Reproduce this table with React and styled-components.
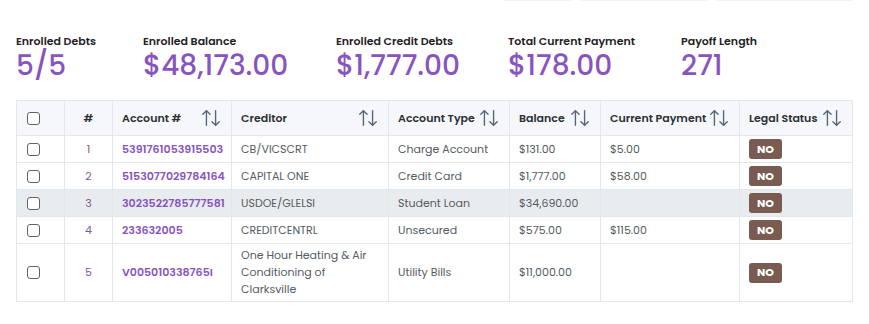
import React from "react";
import styled, { createGlobalStyle } from "styled-components";
import { ArrowUpDown } from "lucide-react";

const ColorPrim = "#8854c0";
const ColorText = "#555b61";
const ColorHead = "#2b2f33";
const ColorLine = "#e3e6ea";

const GlobalStyle = createGlobalStyle`
  html, body {
    margin: 0;
    padding: 0;
    background: #fff;
  }
  body {
    font-family: "Poppins", "Open Sans", "Liberation Sans", sans-serif;
  }
`;

const Page = styled.div`
  box-sizing: border-box;
  min-height: 324px;
  border-right: 1px solid #dcdcdc;
  padding: 0 16px;
`;

const Toolbar = styled.div`
  display: flex;
  justify-content: flex-end;
  gap: 9px;
  height: 2px;
`;

const Ghost = styled.div`
  width: ${(p) => p.w}px;
  height: 1px;
  background: #f1f1f1;
`;

const Stats = styled.div`
  display: grid;
  grid-template-columns: 127px 193px 172px 173px auto;
  padding-top: 32px;
`;

const Stat = styled.div`
  display: flex;
  flex-direction: column;
  gap: 2px;
`;

const Label = styled.span`
  font-size: 11px;
  font-weight: 600;
  line-height: 15px;
  color: #1f2225;
  white-space: nowrap;
`;

const Value = styled.span`
  font-size: 28px;
  font-weight: 500;
  line-height: 30px;
  color: ${ColorPrim};
  white-space: nowrap;
`;

const Table = styled.table`
  margin-top: 19px;
  width: 836px;
  table-layout: fixed;
  border-collapse: collapse;
  font-size: 11px;
  color: ${ColorText};
`;

const Col = styled.col`
  width: ${(p) => p.w}px;
`;

const Th = styled.th`
  background: #f5f7fa;
  border: 1px solid ${ColorLine};
  padding: 6px 9px;
  text-align: ${(p) => (p.center ? "center" : "left")};
  font-weight: 600;
  color: ${ColorHead};
  height: 21px;
`;

const HeadInner = styled.div`
  display: flex;
  align-items: center;
  justify-content: space-between;
  white-space: nowrap;
  svg {
    color: #56677a;
    flex-shrink: 0;
  }
`;

const Row = styled.tr`
  background: ${(p) => (p.active ? "#e9ecef" : "#fff")};
`;

const Td = styled.td`
  border: 1px solid ${ColorLine};
  padding: 3px 9px;
  line-height: 17px;
  vertical-align: middle;
  text-align: ${(p) => (p.center ? "center" : "left")};
  color: ${(p) => (p.purple ? "#7d5a9c" : ColorText)};
`;

const Box = styled.span`
  display: inline-block;
  box-sizing: border-box;
  width: 13px;
  height: 13px;
  border: 1.3px solid #5f6366;
  border-radius: 3px;
  background: #fff;
  vertical-align: middle;
  margin-left: 1px;
`;

const AccountLink = styled.a`
  color: ${ColorPrim};
  font-weight: 600;
  text-decoration: none;
  white-space: nowrap;
`;

const Badge = styled.span`
  display: inline-flex;
  align-items: center;
  justify-content: center;
  width: 33px;
  height: 20px;
  border-radius: 3px;
  background: #795b52;
  color: #fff;
  font-size: 11px;
  font-weight: 700;
`;

const stats = [
  { label: "Enrolled Debts", value: "5/5" },
  { label: "Enrolled Balance", value: "$48,173.00" },
  { label: "Enrolled Credit Debts", value: "$1,777.00" },
  { label: "Total Current Payment", value: "$178.00" },
  { label: "Payoff Length", value: "271" },
];

const debts = [
  { acct: "5391761053915503", creditor: "CB/VICSCRT", type: "Charge Account", balance: "$131.00", payment: "$5.00" },
  { acct: "5153077029784164", creditor: "CAPITAL ONE", type: "Credit Card", balance: "$1,777.00", payment: "$58.00" },
  { acct: "3023522785777581", creditor: "USDOE/GLELSI", type: "Student Loan", balance: "$34,690.00", payment: "", active: true },
  { acct: "233632005", creditor: "CREDITCENTRL", type: "Unsecured", balance: "$575.00", payment: "$115.00" },
  { acct: "V005010338765I", creditor: "One Hour Heating & Air Conditioning of Clarksville", type: "Utility Bills", balance: "$11,000.00", payment: "" },
];

const colWidths = [48, 48, 119, 157, 121, 91, 139, 113];
const columns = ["Account #", "Creditor", "Account Type", "Balance", "Current Payment", "Legal Status"];

const App = () => {
  return (
    <Page>
      <GlobalStyle />
      <Toolbar>
        <Ghost w={69} />
        <Ghost w={126} />
        <Ghost w={137} />
      </Toolbar>
      <Stats>
        {stats.map((s) => (
          <Stat key={s.label}>
            <Label>{s.label}</Label>
            <Value>{s.value}</Value>
          </Stat>
        ))}
      </Stats>
      <Table>
        <colgroup>
          {colWidths.map((w, i) => (
            <Col key={i} w={w} />
          ))}
        </colgroup>
        <thead>
          <tr>
            <Th>
              <Box />
            </Th>
            <Th center>#</Th>
            {columns.map((c) => (
              <Th key={c}>
                <HeadInner>
                  {c}
                  <ArrowUpDown size={22} strokeWidth={1.5} />
                </HeadInner>
              </Th>
            ))}
          </tr>
        </thead>
        <tbody>
          {debts.map((d, i) => (
            <Row key={d.acct} active={d.active}>
              <Td><Box /></Td>
              <Td center purple>{i + 1}</Td>
              <Td><AccountLink href="#">{d.acct}</AccountLink></Td>
              <Td>{d.creditor}</Td>
              <Td>{d.type}</Td>
              <Td>{d.balance}</Td>
              <Td>{d.payment}</Td>
              <Td><Badge>NO</Badge></Td>
            </Row>
          ))}
        </tbody>
      </Table>
    </Page>
  );
};

export default App;
